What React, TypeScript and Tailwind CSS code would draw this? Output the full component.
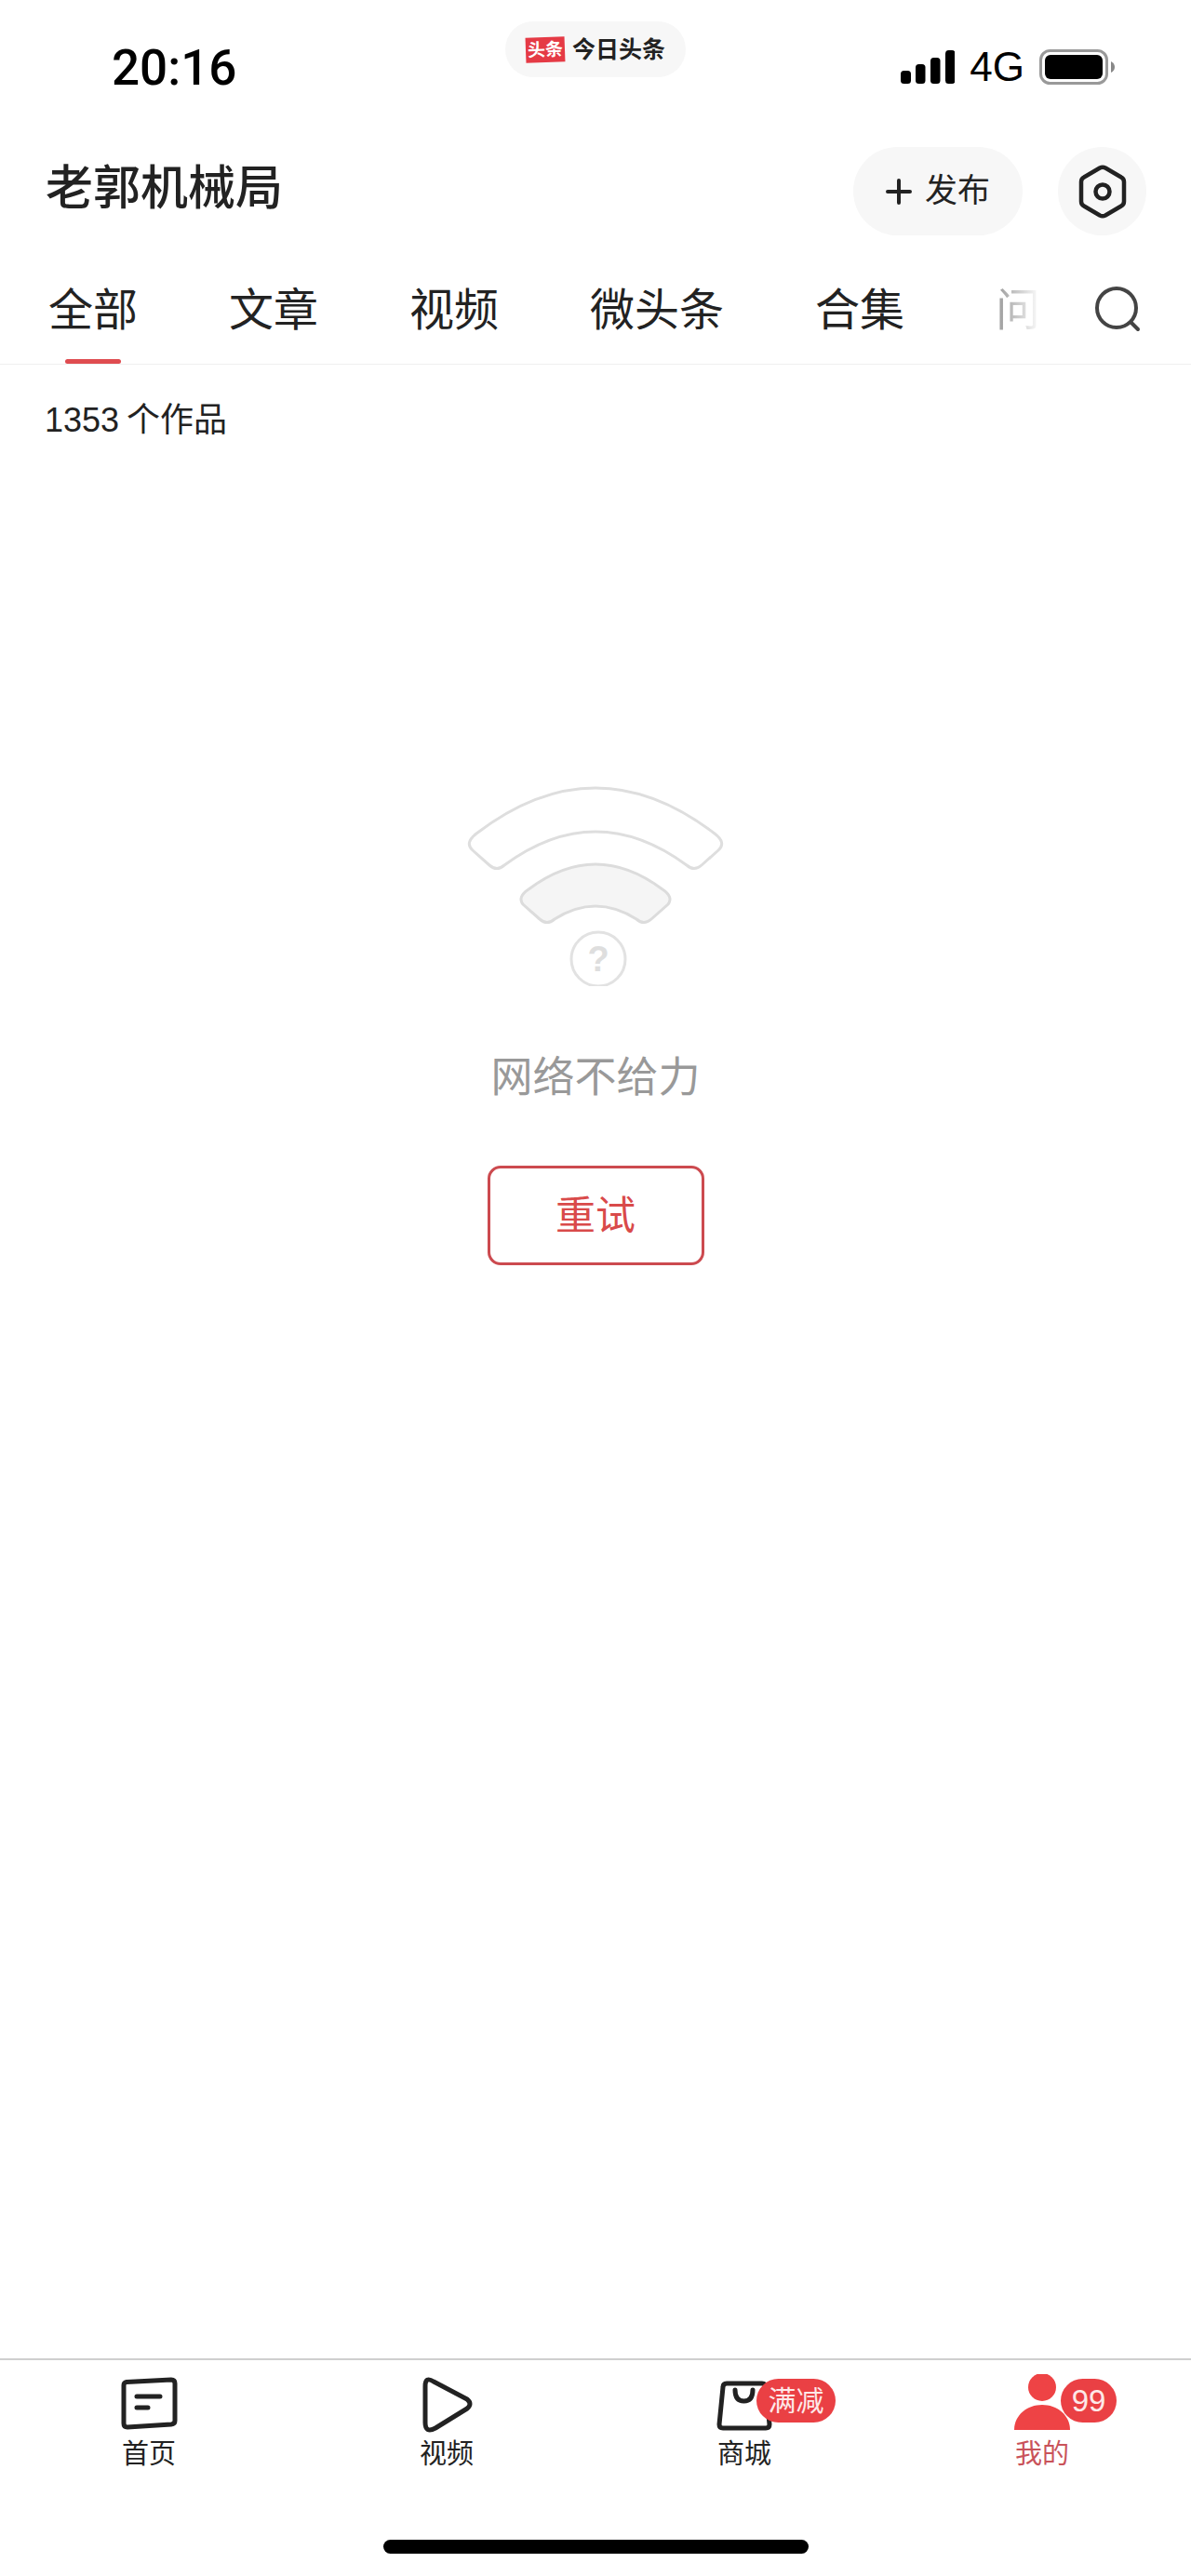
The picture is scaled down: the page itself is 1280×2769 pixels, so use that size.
const tabs = ["全部", "文章", "视频", "微头条", "合集"];

function HomeIcon() {
  return (
    <svg width="64" height="64" viewBox="0 0 64 64" fill="none" stroke="#222" strokeWidth="5" strokeLinecap="round">
      <path d="M8 8.5 L56 6 Q60 6 60 10 L60 50 Q60 53.500 56 54 L9 57 Q5 57 5 53 L5 12 Q5 9 8 8.500 Z" />
      <path d="M19 24 L44 24 M19 36 L31 36" />
    </svg>
  );
}

function PlayIcon() {
  return (
    <svg width="64" height="64" viewBox="0 0 64 64" fill="none" stroke="#222" strokeWidth="5" strokeLinejoin="round">
      <path d="M9 13 Q9 2 18 8 L54 27 Q60 32 54 37 L20 58 Q9 64 9 52 Z" />
    </svg>
  );
}

function ShopIcon() {
  return (
    <svg width="64" height="64" viewBox="0 0 64 64" fill="none" stroke="#222" strokeWidth="5" strokeLinecap="round">
      <path d="M13 10 L51 10 Q55 10 55 14 L59 54 Q59 58 55 58 L9 58 Q5 58 5 54 L9 14 Q9 10 13 10 Z" />
      <path d="M22 17 Q22 29 31.500 29 Q41 29 41 17" />
    </svg>
  );
}

function PersonIcon() {
  return (
    <svg width="64" height="64" viewBox="0 0 64 64" fill="#ee4345">
      <circle cx="32" cy="14" r="15" />
      <path d="M2 60 C2 44 16 33 32 33 C48 33 62 44 62 60 Z" />
    </svg>
  );
}

function WifiIcon() {
  return (
    <svg width="280" height="220" viewBox="0 0 280 220" fill="none" strokeWidth="3">
      <path
        d="M12 56 Q140 -42 268 56 Q281 66 272 74 L254 90 Q246 97 238 90 Q140 18 42 90 Q34 97 26 90 L8 74 Q-1 66 12 56 Z"
        stroke="#dedede"
        fill="#fff"
      />
      <path
        d="M68 116 Q140 62 212 116 Q224 124 218 132 L200 148 Q192 155 184 148 Q140 120 96 148 Q88 155 80 148 L62 132 Q56 124 68 116 Z"
        stroke="#dcdcdc"
        fill="#f5f5f5"
      />
      <circle cx="143" cy="191" r="29" stroke="#e2e2e2" />
      <text x="143" y="204" textAnchor="middle" fontSize="38" fontWeight="700" fill="#dedede" stroke="none">
        ?
      </text>
    </svg>
  );
}

export default function App() {
  return (
    <div className="flex flex-col h-[2769px] bg-white text-[#222] font-['Liberation_Sans','Noto_Sans_CJK_SC',sans-serif]">
      {/* status bar */}
      <div className="grid grid-cols-[1fr_auto_1fr] items-start h-[158px] pt-[23px]">
        <div className="mt-[20px] pl-[120px] text-[53px] leading-[60px] font-medium text-black font-['Roboto',sans-serif]">20:16</div>
        <div className="flex items-center h-[60px] pl-[22px] pr-[22px] rounded-full bg-[#f7f7f7]">
          <span className="flex items-center justify-center w-[42px] h-[27px] bg-[#e53a45] text-white text-[19px] leading-none font-bold -rotate-2">
            头条
          </span>
          <span className="ml-[8px] mt-[2px] text-[25px] font-bold whitespace-nowrap">今日头条</span>
        </div>
        <div className="flex items-center justify-end h-[60px] mt-[19px] pr-[82px]">
          <svg width="58" height="36" viewBox="0 0 58 36" fill="#000">
            <rect x="0" y="22" width="11" height="14" rx="3.500" />
            <rect x="16" y="15" width="10.500" height="21" rx="3.500" />
            <rect x="32" y="8" width="10.500" height="28" rx="3.500" />
            <rect x="48" y="0" width="10.500" height="36" rx="3.500" />
          </svg>
          <span className="ml-[16px] text-[44px] leading-none text-black">4G</span>
          <svg className="ml-[16px]" width="81" height="38" viewBox="0 0 81 38">
            <rect x="1.500" y="1.500" width="71" height="35" rx="10" fill="none" stroke="#999" strokeWidth="3" />
            <rect x="6" y="6" width="62" height="26" rx="6" fill="#000" />
            <path d="M77 13 Q81 15 81 19 Q81 23 77 25 Z" fill="#888" />
          </svg>
        </div>
      </div>

      {/* profile title */}
      <div className="flex items-center h-[95px] pl-[49px] pr-[48px]">
        <h1 className="-mt-[6px] text-[51px] font-medium leading-none">老郭机械局</h1>
        <button className="flex items-center ml-auto w-[182px] h-[95px] pl-[33px] rounded-full bg-[#f7f7f7] text-[35px]">
          <svg width="32" height="32" viewBox="0 0 32 32" stroke="#222" strokeWidth="4" strokeLinecap="round">
            <path d="M16 4 L16 28 M4 16 L28 16" />
          </svg>
          <span className="ml-[12px] whitespace-nowrap">发布</span>
        </button>
        <button className="flex items-center justify-center ml-[38px] w-[95px] h-[95px] rounded-full bg-[#f7f7f7]">
          <svg width="56" height="60" viewBox="0 0 56 60" fill="none" stroke="#222" strokeWidth="4.5" strokeLinejoin="round">
            <path d="M25 4.500 Q28 3 31 4.500 L48 14.500 Q51 16 51 19.500 L51 40.500 Q51 44 48 45.500 L31 55.500 Q28 57 25 55.500 L8 45.500 Q5 44 5 40.500 L5 19.500 Q5 16 8 14.500 Z" />
            <circle cx="28" cy="30" r="7.500" />
          </svg>
        </button>
      </div>

      {/* tabs */}
      <div className="flex items-start justify-between h-[139px] pl-[52px] pr-[53px] border-b border-[#f0f0f0]">
        <div className="flex h-full gap-[98px]">
          {tabs.map((t, i) => (
            <div key={t} className="relative h-full pt-[57px] text-[48px] leading-[48px] whitespace-nowrap">
              {t}
              {i === 0 && <div className="absolute left-[18px] bottom-0 w-[60px] h-[5px] rounded-sm bg-[#df4c50]"></div>}
            </div>
          ))}
          <div className="h-fit pt-[57px] text-[48px] leading-[48px] bg-gradient-to-r from-[#999] to-[#fff] bg-clip-text text-transparent">
            问
          </div>
        </div>
        <svg className="shrink-0 mt-[54px]" width="52" height="52" viewBox="0 0 52 52" fill="none" stroke="#444" strokeWidth="4" strokeLinecap="round">
          <circle cx="25" cy="24" r="21" />
          <path d="M41 40 L48 47" />
        </svg>
      </div>

      {/* content */}
      <div className="flex-1 flex flex-col">
        <div className="pt-[42px] pl-[48px] text-[36px] leading-[36px]">
          1353<span className="ml-[8px]">个作品</span>
        </div>
        <div className="flex flex-col items-center mt-[370px]">
          <WifiIcon />
          <p className="mt-[69px] text-[45px] leading-[60px] text-[#999]">网络不给力</p>
          <button className="mt-[64px] w-[233px] h-[107px] pt-[2px] rounded-[14px] border-[3px] border-[#cc4a4f] text-[43px] text-[#d94a4a]">
            重试
          </button>
        </div>
      </div>

      {/* bottom nav */}
      <div className="border-t-2 border-[#cfcfcf] pb-[24px]">
        <div className="grid grid-cols-4 pt-[15px]">
          <div className="flex flex-col items-center">
            <HomeIcon />
            <span className="mt-[4px] text-[29px] leading-[36px]">首页</span>
          </div>
          <div className="flex flex-col items-center">
            <PlayIcon />
            <span className="mt-[4px] text-[29px] leading-[36px]">视频</span>
          </div>
          <div className="relative flex flex-col items-center">
            <ShopIcon />
            <span className="mt-[4px] text-[29px] leading-[36px]">商城</span>
            <span className="absolute left-[173px] top-[5px] flex items-center justify-center w-[85px] h-[47px] rounded-full bg-[#ea4044] text-[#fde8e8] text-[30px] leading-none">
              满减
            </span>
          </div>
          <div className="relative flex flex-col items-center">
            <PersonIcon />
            <span className="mt-[4px] text-[29px] leading-[36px] text-[#c9535a]">我的</span>
            <span className="absolute left-[180px] top-[5px] flex items-center justify-center w-[60px] h-[47px] rounded-full bg-[#ea4044] text-[#fde8e8] text-[33px] leading-none">
              99
            </span>
          </div>
        </div>
        <div className="mt-[74px] mx-auto w-[457px] h-[15px] rounded-full bg-black"></div>
      </div>
    </div>
  );
}
